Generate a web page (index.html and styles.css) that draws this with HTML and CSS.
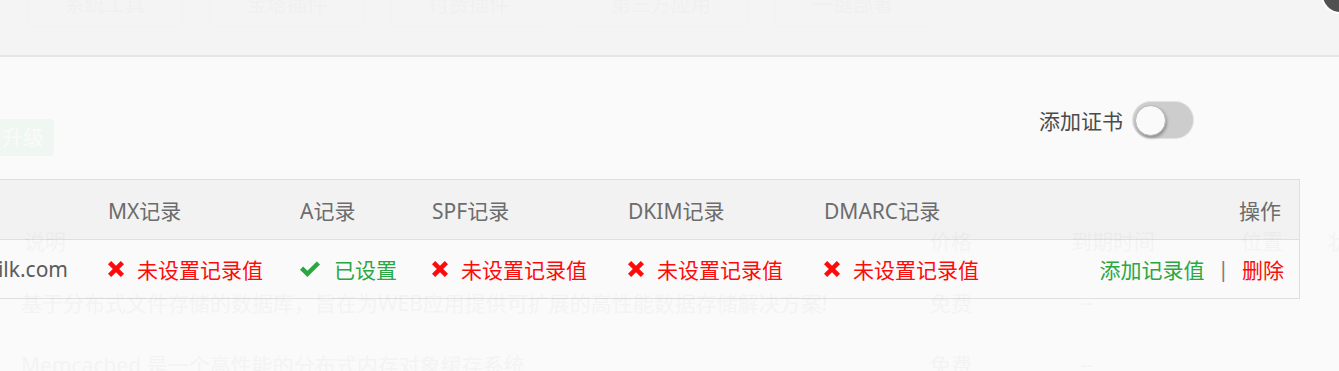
FILE: index.html
```html
<!DOCTYPE html>
<html lang="zh-CN">
<head>
  <meta charset="UTF-8" />
  <title>添加邮件域名</title>
  <link rel="stylesheet" href="styles.css">
</head>
<body>
  <!-- page behind the layer -->
  <div class="store">
    <div class="store-tabs">
      <span class="store-tab">系统工具</span>
      <span class="store-tab">宝塔插件</span>
      <span class="store-tab">付费插件</span>
      <span class="store-tab">第三方应用</span>
      <span class="store-tab">一键部署</span>
    </div>
    <div class="store-bar">
      <span class="btn-upgrade">升级</span>
    </div>
    <div class="soft-list">
      <div class="soft-row">
        <span>说明</span><span>价格</span><span>到期时间</span><span>位置</span><span>状态</span>
      </div>
      <div class="soft-row">
        <span class="soft-desc">基于分布式文件存储的数据库，旨在为WEB应用提供可扩展的高性能数据存储解决方案!</span>
        <span>免费</span><span class="dash">--</span><span></span><span></span>
      </div>
      <div class="soft-row">
        <span class="soft-desc">Memcached 是一个高性能的分布式内存对象缓存系统</span>
        <span>免费</span><span class="dash">--</span><span></span><span></span>
      </div>
    </div>
  </div>

  <!-- layer -->
  <div class="layer">
    <div class="layer-title"></div>
    <div class="layer-body">
      <div class="cert-bar">
        <span>添加证书</span>
        <span class="switch"><i></i></span>
      </div>

      <div class="records">
        <div class="rec-row rec-head">
          <div class="cell cell-domain"></div>
          <div class="cell">MX记录</div>
          <div class="cell">A记录</div>
          <div class="cell">SPF记录</div>
          <div class="cell">DKIM记录</div>
          <div class="cell">DMARC记录</div>
          <div class="cell cell-ops">操作</div>
        </div>
        <div class="rec-row">
          <div class="cell cell-domain"><span>mail.milk.com</span></div>
          <div class="cell status bad">
            <svg class="ico-x" viewBox="0 0 16 16"><path d="M0 3.2 L3.2 0 L8 4.8 L12.8 0 L16 3.2 L11.2 8 L16 12.8 L12.8 16 L8 11.2 L3.2 16 L0 12.8 L4.8 8 Z"/></svg>
            未设置记录值
          </div>
          <div class="cell status ok">
            <svg class="ico-ok" viewBox="0 0 20 16"><path d="M0 8.8 L3.2 5.6 L7.4 9.8 L16.8 0.4 L20 3.6 L7.4 16 Z"/></svg>
            已设置
          </div>
          <div class="cell status bad">
            <svg class="ico-x" viewBox="0 0 16 16"><path d="M0 3.2 L3.2 0 L8 4.8 L12.8 0 L16 3.2 L11.2 8 L16 12.8 L12.8 16 L8 11.2 L3.2 16 L0 12.8 L4.8 8 Z"/></svg>
            未设置记录值
          </div>
          <div class="cell status bad">
            <svg class="ico-x" viewBox="0 0 16 16"><path d="M0 3.2 L3.2 0 L8 4.8 L12.8 0 L16 3.2 L11.2 8 L16 12.8 L12.8 16 L8 11.2 L3.2 16 L0 12.8 L4.8 8 Z"/></svg>
            未设置记录值
          </div>
          <div class="cell status bad">
            <svg class="ico-x" viewBox="0 0 16 16"><path d="M0 3.2 L3.2 0 L8 4.8 L12.8 0 L16 3.2 L11.2 8 L16 12.8 L12.8 16 L8 11.2 L3.2 16 L0 12.8 L4.8 8 Z"/></svg>
            未设置记录值
          </div>
          <div class="cell cell-ops">
            <a class="op-add">添加记录值</a>
            <span class="op-sep">|</span>
            <a class="op-del">删除</a>
          </div>
        </div>
      </div>
    </div>
    <span class="layer-close"></span>
  </div>
</body>
</html>
```

FILE: styles.css
```css
html, body {
  margin: 0;
  padding: 0;
  height: 100%;
  overflow: hidden;
  background: #fafafa;
  font-family: "Noto Sans", "Noto Sans CJK SC", sans-serif;
}

body {
  position: relative;
}

/* ---- store page (behind) ---- */
.store {
  width: 1420px;
  color: #666;
}

.store-tabs {
  display: flex;
  gap: 26px;
  padding-left: 27px;
  margin-top: -17px;
}

.store-tab {
  height: 42px;
  line-height: 42px;
  padding: 0 37px;
  font-size: 20px;
  color: #999;
  background: #fff;
  border: 1px solid #d6d6d6;
}

.store-bar {
  margin-top: 92px;
  display: flex;
}

.btn-upgrade {
  height: 37px;
  line-height: 37px;
  padding: 0 10px 0 2px;
  font-size: 21px;
  color: #fff;
  background: #20a53a;
  border-radius: 0 4px 4px 0;
}

.soft-list {
  margin-top: 53px;
}

.soft-row {
  display: grid;
  grid-template-columns: 906px 141px 170px 87px 100px;
  padding-left: 24px;
  height: 62px;
  align-items: center;
  font-size: 21px;
  white-space: nowrap;
}

.soft-desc {
  margin-left: -3px;
}

.dash {
  padding-left: 9px;
}

/* ---- layer ---- */
.layer {
  position: absolute;
  top: 0;
  left: 0;
  right: 0;
  bottom: 0;
  background: #fafafa;
  opacity: 0.955;
}

.layer-title {
  height: 55px;
  background: #f4f4f4;
  border-bottom: 2px solid #e6e6e6;
}

.layer-body {
  padding-top: 45px;
}

.layer-close {
  position: absolute;
  top: -22px;
  right: -18px;
  width: 34px;
  height: 34px;
  border-radius: 50%;
  background: #4a4a4a;
  box-shadow: 0 0 0 2px #fff;
}

.cert-bar {
  display: flex;
  justify-content: flex-end;
  align-items: center;
  gap: 10px;
  padding-right: 146px;
  font-size: 21px;
  color: #444;
}

.switch {
  width: 60px;
  height: 36px;
  border-radius: 18px;
  background: #cbcbcb;
  box-shadow: 0 0 0 1px #e2e2e2;
  display: flex;
  align-items: center;
  padding-left: 2px;
  box-sizing: border-box;
}

.switch i {
  width: 31px;
  height: 31px;
  border-radius: 50%;
  background: #fafafa;
  border: 1px solid #b5b5b5;
  box-sizing: border-box;
  box-shadow: 1px 2px 3px rgba(0, 0, 0, 0.3);
}

.records {
  margin-top: 41px;
  width: 1300px;
  border-top: 1px solid #dedede;
  border-right: 1px solid #dedede;
  box-sizing: border-box;
}

.rec-row {
  display: grid;
  grid-template-columns: 88px 192px 132px 196px 196px 240px 1fr;
  height: 58px;
  border-bottom: 1px solid #dedede;
  font-size: 21px;
  white-space: nowrap;
}

.rec-head {
  height: 59px;
  background: #f2f2f2;
  color: #666;
}

.cell {
  display: flex;
  align-items: center;
  padding: 0 20px;
  min-width: 0;
}

.cell-domain {
  justify-content: flex-end;
  overflow: hidden;
  color: #555;
}

.cell-ops {
  justify-content: flex-end;
  padding-right: 15px;
}

.rec-head .cell-ops {
  padding-right: 18px;
}

.status svg {
  flex: none;
  fill: currentColor;
}

.ico-x {
  width: 16px;
  height: 16px;
  margin-right: 13px;
}

.ico-ok {
  width: 20px;
  height: 16px;
  margin-right: 14px;
}

.bad {
  color: #ff0000;
}

.ok {
  color: #20a53a;
}

.op-add {
  color: #20a53a;
}

.op-sep {
  color: #777;
  margin: 0 13px;
}

.op-del {
  color: #ff0000;
}
```
